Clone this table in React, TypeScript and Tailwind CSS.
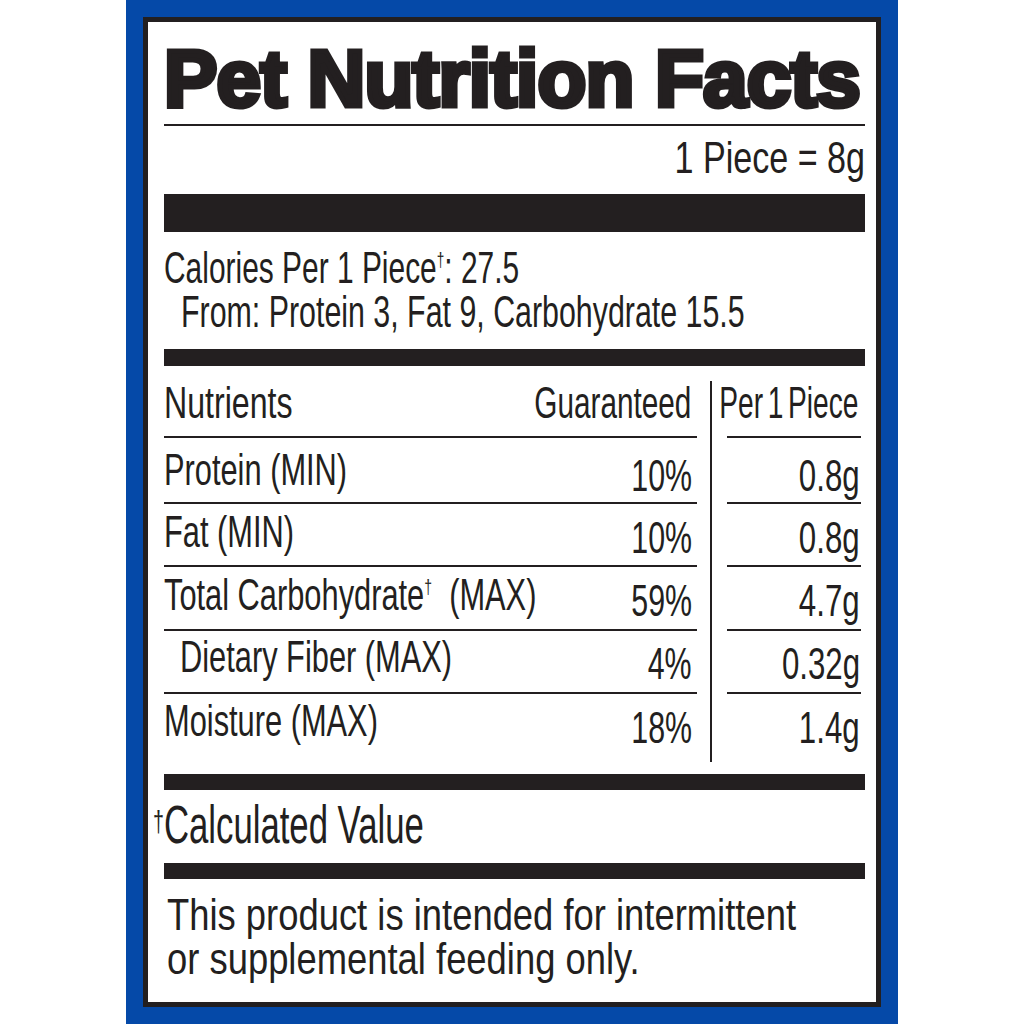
import type { ReactNode } from 'react'

type Nutrient = {
  label: ReactNode
  guaranteed: string
  perPiece: string
  height: string
  labelPad: string
  valuePad: string
  indent?: boolean
  last?: boolean
}

function Dagger({ className = 'text-[20px] align-[16px]' }: { className?: string }) {
  return <span className={`leading-none ${className}`}>†</span>
}

// condensed type: regular sans squeezed horizontally
function Line({
  children,
  className = '',
  size = 'text-[44px] leading-[44px]',
}: {
  children: ReactNode
  className?: string
  size?: string
}) {
  return <div className={`whitespace-nowrap ${size} ${className}`}>{children}</div>
}

const nutrients: Nutrient[] = [
  { label: 'Protein (MIN)', guaranteed: '10%', perPiece: '0.8g', height: 'h-[66px]', labelPad: 'pt-[10px]', valuePad: 'pt-[16px]' },
  { label: 'Fat (MIN)', guaranteed: '10%', perPiece: '0.8g', height: 'h-[63px]', labelPad: 'pt-[6px]', valuePad: 'pt-[12px]' },
  {
    label: (
      <>
        Total Carbohydrate<Dagger />
        {'\u00a0 '}(MAX)
      </>
    ),
    guaranteed: '59%',
    perPiece: '4.7g',
    height: 'h-[64px]',
    labelPad: 'pt-[6px]',
    valuePad: 'pt-[12px]',
  },
  { label: 'Dietary Fiber (MAX)', guaranteed: '4%', perPiece: '0.32g', height: 'h-[63px]', labelPad: 'pt-[4px]', valuePad: 'pt-[11px]', indent: true },
  { label: 'Moisture (MAX)', guaranteed: '18%', perPiece: '1.4g', height: 'h-[68px]', labelPad: 'pt-[5px]', valuePad: 'pt-[12px]', last: true },
]

export default function App() {
  return (
    <div className="flex justify-center bg-white font-['Liberation_Sans',Arial,sans-serif] text-[#231f20]">
      <div className="h-[1024px] w-[772px] bg-[#0549a8] p-[17px]">
        <div className="h-full border-[5px] border-[#231f20] bg-white pl-4 pr-[11px] pt-[17px]">
          <h1 className="whitespace-nowrap text-[80px] leading-[80px] font-bold tracking-[-0.8px] [-webkit-text-stroke:5px_#231f20]">
            Pet Nutrition Facts
          </h1>
          <div className="mt-[5px] h-[2px] bg-[#231f20]" />
          <Line className="mt-[10px] origin-right scale-x-[0.775] text-right">1 Piece = 8g</Line>
          <div className="mt-[14px] h-[38px] bg-[#231f20]" />

          {/* Calories */}
          <Line className="mt-[14px] origin-left scale-x-[0.68]">
            Calories Per 1 Piece<Dagger />: 27.5
          </Line>
          <Line className="ml-[17px] origin-left scale-x-[0.69]">From: Protein 3, Fat 9, Carbohydrate 15.5</Line>
          <div className="mt-[15px] h-[17px] bg-[#231f20]" />

          {/* Nutrients table */}
          <div className="mt-[15px] flex h-[381px]">
            <div className="flex w-[533px] flex-col">
              <div className="flex h-[57px] justify-between border-b-2 border-[#231f20]">
                <Line className="min-w-0 flex-1 origin-left scale-x-[0.73]">Nutrients</Line>
                <Line className="mr-[6px] shrink-0 origin-right scale-x-[0.676]">Guaranteed</Line>
              </div>
              {nutrients.map((n, i) => (
                <div
                  key={i}
                  className={`flex justify-between ${n.height} ${n.last ? '' : 'border-b-2 border-[#231f20]'}`}
                >
                  <Line
                    className={`min-w-0 flex-1 origin-left scale-x-[0.70] ${n.labelPad} ${n.indent ? 'ml-[16px]' : ''}`}
                  >
                    {n.label}
                  </Line>
                  <Line className={`mr-[5px] shrink-0 origin-right scale-x-[0.69] ${n.valuePad}`}>{n.guaranteed}</Line>
                </div>
              ))}
            </div>

            <div className="ml-[13px] mr-[15px] w-[2px] bg-[#231f20]" />

            <div className="flex w-[134px] flex-col">
              <div className="flex h-[57px] justify-end border-b-2 border-[#231f20]">
                <Line className="mr-[3px] origin-right scale-x-[0.64] [word-spacing:-5px]">Per 1 Piece</Line>
              </div>
              {nutrients.map((n, i) => (
                <div
                  key={i}
                  className={`flex justify-end ${n.height} ${n.last ? '' : 'border-b-2 border-[#231f20]'}`}
                >
                  <Line className={`mr-[1px] origin-right scale-x-[0.71] ${n.valuePad}`}>{n.perPiece}</Line>
                </div>
              ))}
            </div>
          </div>

          <div className="mt-[12px] h-[16px] bg-[#231f20]" />
          <Line className="mt-[8px] -ml-[11px] origin-left scale-x-[0.655]" size="text-[53px] leading-[53px]">
            <Dagger className="text-[30px] align-[11px]" />
            Calculated Value
          </Line>
          <div className="mt-[12px] h-[16px] bg-[#231f20]" />

          <div className="mt-[14px] ml-[3px]">
            <Line className="origin-left scale-x-[0.827]">This product is intended for intermittent</Line>
            <Line className="origin-left scale-x-[0.827]">or supplemental feeding only.</Line>
          </div>
        </div>
      </div>
    </div>
  )
}
